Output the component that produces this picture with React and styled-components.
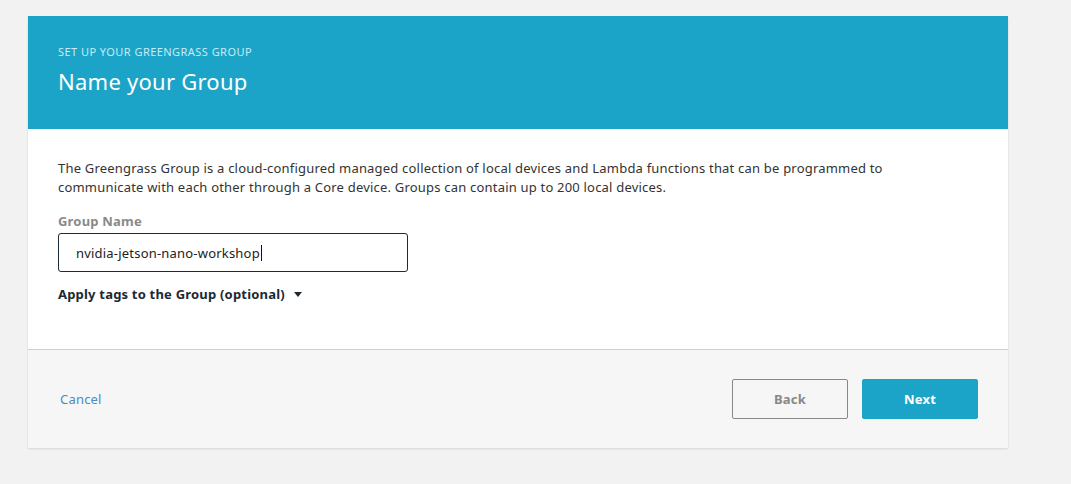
import styled, { createGlobalStyle } from 'styled-components';

const GlobalStyle = createGlobalStyle`
  body {
    margin: 0;
    background: #f2f2f2;
    font-family: 'Noto Sans', 'Open Sans', Arial, sans-serif;
  }
`;

const Page = styled.div`
  padding: 16px 63px 36px 28px;
`;

const Card = styled.div`
  width: 980px;
  background: #ffffff;
  box-shadow: 0 1px 2px rgba(0, 0, 0, 0.12);
`;

const Header = styled.div`
  display: flex;
  flex-direction: column;
  height: 113px;
  padding: 28px 30px 0;
  box-sizing: border-box;
  background: #1ba4c8;
`;

const Eyebrow = styled.div`
  font-size: 11px;
  line-height: 16px;
  color: #c6ecf6;
  letter-spacing: 0.45px;
`;

const Title = styled.h1`
  margin: 6px 0 0;
  font-size: 22px;
  font-weight: 400;
  line-height: 30px;
  color: #ffffff;
  letter-spacing: 0.25px;
`;

const Body = styled.div`
  padding: 30px 30px 46px;
  border-bottom: 1px solid #d0d0d0;
  letter-spacing: 0.2px;
`;

const Description = styled.p`
  margin: 0;
  width: 880px;
  font-size: 13px;
  line-height: 19px;
  color: #333333;
`;

const Label = styled.div`
  margin-top: 15px;
  font-size: 13px;
  font-weight: 700;
  line-height: 18px;
  color: #8a8a8a;
`;

const Field = styled.div`
  display: flex;
  align-items: center;
  width: 350px;
  height: 39px;
  margin-top: 3px;
  padding: 0 17px;
  box-sizing: border-box;
  border: 1px solid #1c2b36;
  border-radius: 3px;
  font-size: 13px;
  color: #222222;
`;

const Caret = styled.span`
  display: inline-block;
  width: 1px;
  height: 16px;
  margin-left: 1px;
  background: #111111;
`;

const Toggle = styled.div`
  display: flex;
  align-items: center;
  gap: 9px;
  margin-top: 13px;
  font-size: 13px;
  font-weight: 700;
  line-height: 18px;
  color: #1b2a35;
`;

const Triangle = styled.span`
  width: 0;
  height: 0;
  border-left: 4px solid transparent;
  border-right: 4px solid transparent;
  border-top: 5px solid #1b2a35;
`;

const Footer = styled.div`
  display: flex;
  align-items: center;
  justify-content: space-between;
  height: 98px;
  padding: 0 30px 0 32px;
  background: #f6f6f6;
`;

const LinkButton = styled.span`
  font-size: 13px;
  letter-spacing: 0.2px;
  color: #4a8bc2;
  cursor: pointer;
`;

const Actions = styled.div`
  display: flex;
  gap: 14px;
`;

const Button = styled.button`
  width: 116px;
  height: 40px;
  border-radius: 2px;
  border: 1px solid ${(p) => (p.$primary ? '#1ba4c8' : '#888888')};
  background: ${(p) => (p.$primary ? '#1ba4c8' : 'transparent')};
  color: ${(p) => (p.$primary ? '#ffffff' : '#888888')};
  font-family: inherit;
  font-size: 13px;
  font-weight: 700;
  letter-spacing: 0.2px;
  cursor: pointer;
`;

const App = () => {
  return (
    <Page>
      <GlobalStyle />
      <Card>
        <Header>
          <Eyebrow>SET UP YOUR GREENGRASS GROUP</Eyebrow>
          <Title>Name your Group</Title>
        </Header>
        <Body>
          <Description>
            The Greengrass Group is a cloud-configured managed collection of local devices and
            Lambda functions that can be programmed to communicate with each other through a Core
            device. Groups can contain up to 200 local devices.
          </Description>
          <Label>Group Name</Label>
          <Field>
            nvidia-jetson-nano-workshop
            <Caret />
          </Field>
          <Toggle>
            Apply tags to the Group (optional)
            <Triangle />
          </Toggle>
        </Body>
        <Footer>
          <LinkButton>Cancel</LinkButton>
          <Actions>
            <Button>Back</Button>
            <Button $primary>Next</Button>
          </Actions>
        </Footer>
      </Card>
    </Page>
  );
};

export default App;
